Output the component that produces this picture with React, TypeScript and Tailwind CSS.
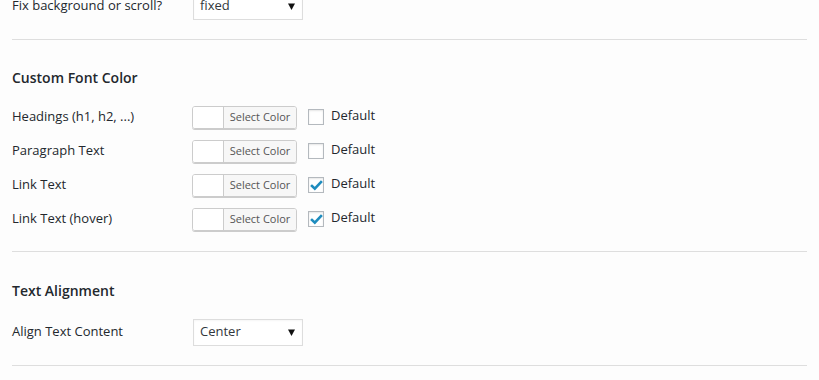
import React from "react";

const font = { fontFamily: '"Open Sans", "Liberation Sans", sans-serif' };

function Select({ value }: { value: string }) {
  return (
    <div className="flex h-[27px] w-[110px] items-center justify-between border border-[#dddddd] bg-white pl-[6px] pr-[7px] text-[13px] text-[#32373c] shadow-[inset_0_1px_2px_rgba(0,0,0,0.04)]">
      <span>{value}</span>
      <svg width="7" height="7" viewBox="0 0 7 7">
        <polygon points="0,0.5 7,0.5 3.5,7" fill="#111" />
      </svg>
    </div>
  );
}

function ColorPicker() {
  return (
    <div className="flex h-[23px] w-[105px] overflow-hidden rounded-[3px] border border-[#cccccc] shadow-[0_1px_0_#cccccc]">
      <div className="w-[31px] border-r border-[#cccccc] bg-white" />
      <div className="flex flex-1 items-center justify-center bg-[#f7f7f7] text-[11px] text-[#555]">
        Select Color
      </div>
    </div>
  );
}

function Checkbox({ checked }: { checked: boolean }) {
  return (
    <div className="flex h-[16px] w-[16px] items-center justify-center border border-[#b4b9be] bg-white shadow-[inset_0_1px_2px_rgba(0,0,0,0.1)]">
      {checked && (
        <svg width="13" height="12" viewBox="0 0 13 12">
          <path d="M2 7 L4.8 9.6 L11 3" stroke="#1e8cbe" strokeWidth="2.6" fill="none" strokeLinecap="square" />
        </svg>
      )}
    </div>
  );
}

function ColorRow({ label, checked }: { label: string; checked: boolean }) {
  return (
    <div className="flex h-[34px] items-center">
      <div className="w-[180px] text-[13px] text-[#23282d]">{label}</div>
      <ColorPicker />
      <div className="ml-[11px] flex items-center">
        <Checkbox checked={checked} />
        <span className="ml-[7px] -mt-[3px] text-[13px] text-[#23282d]">Default</span>
      </div>
    </div>
  );
}

export default function App() {
  return (
    <div className="h-[380px] w-[819px] overflow-hidden bg-[#fdfdfd] px-[12px]" style={font}>
      <div className="-mt-[8px] flex h-[28px] items-center">
        <div className="w-[181px] text-[13px] text-[#23282d]">Fix background or scroll?</div>
        <Select value="fixed" />
      </div>
      <div className="mt-[19px] border-t border-[#dedede]" />
      <div className="mt-[27px] flex h-[20px] items-center text-[14px] font-semibold text-[#23282d]">
        Custom Font Color
      </div>
      <div className="mt-[13px]">
        <ColorRow label="Headings (h1, h2, ...)" checked={false} />
        <ColorRow label="Paragraph Text" checked={false} />
        <ColorRow label="Link Text" checked={true} />
        <ColorRow label="Link Text (hover)" checked={true} />
      </div>
      <div className="mt-[15px] border-t border-[#dedede]" />
      <div className="mt-[28px] flex h-[20px] items-center text-[14px] font-semibold text-[#23282d]">
        Text Alignment
      </div>
      <div className="mt-[15px] flex h-[34px] items-center">
        <div className="w-[181px] text-[13px] text-[#23282d]">Align Text Content</div>
        <Select value="Center" />
      </div>
      <div className="mt-[16px] border-t border-[#dedede]" />
    </div>
  );
}
